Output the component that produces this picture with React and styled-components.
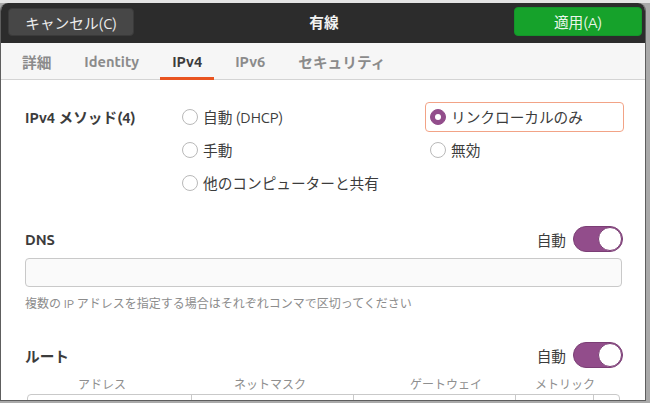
import styled, { createGlobalStyle } from 'styled-components';

const GlobalStyle = createGlobalStyle`
  html, body {
    margin: 0;
    padding: 0;
    width: 650px;
    height: 403px;
    overflow: hidden;
    background: #a9a9a9;
  }
  body {
    font-family: Ubuntu, "Noto Sans", "Noto Sans CJK JP", sans-serif;
  }
`;

const App = () => {
  return (
    <>
      <GlobalStyle />
      <Backdrop>
        <Window>
          <HeaderBar>
            <HeaderButton>キャンセル(C)</HeaderButton>
            <Title>有線</Title>
            <HeaderButton $primary>適用(A)</HeaderButton>
          </HeaderBar>
          <TabBar>
            <Tab>詳細</Tab>
            <Tab>Identity</Tab>
            <Tab $active>IPv4</Tab>
            <Tab>IPv6</Tab>
            <Tab>セキュリティ</Tab>
          </TabBar>
          <Content>
            <MethodGrid>
              <FieldLabel>IPv4 メソッド(4)</FieldLabel>
              <Option>
                <Radio />
                自動 (DHCP)
              </Option>
              <Option $focused>
                <Radio $checked />
                リンクローカルのみ
              </Option>
              <span />
              <Option>
                <Radio />
                手動
              </Option>
              <Option>
                <Radio />
                無効
              </Option>
              <span />
              <Option>
                <Radio />
                他のコンピューターと共有
              </Option>
            </MethodGrid>

            <SectionHeader $top={27}>
              <FieldLabel>DNS</FieldLabel>
              <AutoSwitch>
                自動
                <Toggle $on />
              </AutoSwitch>
            </SectionHeader>
            <TextInput />
            <Hint>複数の IP アドレスを指定する場合はそれぞれコンマで区切ってください</Hint>

            <SectionHeader $top={30}>
              <FieldLabel>ルート</FieldLabel>
              <AutoSwitch>
                自動
                <Toggle $on />
              </AutoSwitch>
            </SectionHeader>
            <ColumnHeads>
              <span>アドレス</span>
              <span>ネットマスク</span>
              <span>ゲートウェイ</span>
              <span>メトリック</span>
            </ColumnHeads>
            <RouteRow>
              <Cell />
              <Cell />
              <Cell />
              <Cell />
              <Cell />
            </RouteRow>
          </Content>
        </Window>
      </Backdrop>
    </>
  );
};

export default App;

const Backdrop = styled.div`
  width: 650px;
  height: 403px;
  padding-top: 3px;
  box-sizing: border-box;
  background: linear-gradient(to bottom, #e4e4e4 0, #e4e4e4 3px, #a9a9a9 3px);
`;

const Window = styled.div`
  width: 646px;
  height: 398px;
  box-sizing: border-box;
  border: 1px solid #5e5e5e;
  border-top: none;
  border-radius: 8px 8px 0 0;
  overflow: hidden;
  background: #ffffff;
  display: flex;
  flex-direction: column;
`;

const HeaderBar = styled.div`
  height: 40px;
  flex-shrink: 0;
  box-sizing: border-box;
  padding: 4px 3px 7px 7px;
  background: #2c2c2c;
  display: flex;
  align-items: stretch;
`;

const HeaderButton = styled.div`
  width: ${(p) => (p.$primary ? '128px' : '126px')};
  box-sizing: border-box;
  border-radius: 4px;
  margin-top: ${(p) => (p.$primary ? '0' : '1px')};
  background: ${(p) => (p.$primary ? '#16a22b' : '#474747')};
  border: 1px solid ${(p) => (p.$primary ? '#13952a' : '#3a3a3a')};
  color: ${(p) => (p.$primary ? '#eaf6ea' : '#ececec')};
  font-size: 14.67px;
  display: flex;
  align-items: center;
  justify-content: center;
`;

const Title = styled.div`
  flex: 1;
  color: #f2f2f2;
  font-weight: bold;
  font-size: 14.67px;
  display: flex;
  align-items: center;
  justify-content: center;
`;

const TabBar = styled.div`
  height: 37px;
  flex-shrink: 0;
  box-sizing: border-box;
  background: #f6f6f6;
  border-bottom: 1px solid #d4d4d4;
  padding-left: 9px;
  display: flex;
  gap: 9px;
`;

const Tab = styled.div`
  padding: 0 12px;
  margin-bottom: -1px;
  display: flex;
  align-items: center;
  font-size: 14.67px;
  font-weight: bold;
  color: ${(p) => (p.$active ? '#3c3c3c' : '#8b8b8b')};
  box-shadow: ${(p) => (p.$active ? 'inset 0 -3px 0 #e95420' : 'none')};
`;

const Content = styled.div`
  padding: 20px 22px 0 24px;
  display: flex;
  flex-direction: column;
`;

const MethodGrid = styled.div`
  display: grid;
  grid-template-columns: 157px 248px 1fr;
  grid-auto-rows: 33px;
  align-items: center;
`;

const FieldLabel = styled.div`
  font-size: 14.67px;
  font-weight: bold;
  color: #3c3c3c;
`;

const Option = styled.div`
  display: flex;
  align-items: center;
  gap: 5px;
  font-size: 14.67px;
  color: #3c3c3c;
  box-sizing: border-box;
  height: ${(p) => (p.$focused ? '30px' : '33px')};
  margin-left: ${(p) => (p.$focused ? '-5px' : '0')};
  margin-right: ${(p) => (p.$focused ? '-1px' : '0')};
  padding-left: ${(p) => (p.$focused ? '4px' : '0')};
  border: ${(p) => (p.$focused ? '1.5px solid #f2a386' : 'none')};
  border-radius: 4px;
`;

const Radio = styled.span`
  width: 16px;
  height: 16px;
  box-sizing: border-box;
  border-radius: 50%;
  flex-shrink: 0;
  background: ${(p) => (p.$checked ? '#924d8b' : '#ffffff')};
  border: 1px solid ${(p) => (p.$checked ? '#924d8b' : '#b9b9b9')};
  display: flex;
  align-items: center;
  justify-content: center;

  &::after {
    content: '';
    display: ${(p) => (p.$checked ? 'block' : 'none')};
    width: 6px;
    height: 6px;
    border-radius: 50%;
    background: #ffffff;
  }
`;

const SectionHeader = styled.div`
  margin-top: ${(p) => p.$top}px;
  height: 26px;
  display: flex;
  align-items: center;
  justify-content: space-between;
`;

const AutoSwitch = styled.div`
  display: flex;
  align-items: center;
  gap: 7px;
  font-size: 14.67px;
  color: #3c3c3c;
`;

const Toggle = styled.span`
  width: 50px;
  height: 26px;
  box-sizing: border-box;
  border-radius: 13px;
  background: ${(p) => (p.$on ? '#924d8b' : '#e0e0e0')};
  border: 1px solid ${(p) => (p.$on ? '#7b3e75' : '#c0c0c0')};
  display: flex;
  justify-content: ${(p) => (p.$on ? 'flex-end' : 'flex-start')};

  &::after {
    content: '';
    width: 24px;
    height: 24px;
    box-sizing: border-box;
    border-radius: 50%;
    background: #ffffff;
    border: 1px solid #7b3e75;
  }
`;

const TextInput = styled.div`
  margin-top: 6px;
  margin-right: 1px;
  height: 29px;
  box-sizing: border-box;
  background: #fafafa;
  border: 1px solid #c9c9c9;
  border-radius: 4px;
`;

const Hint = styled.div`
  margin-top: 9px;
  font-size: 12px;
  line-height: 16px;
  color: #8c8c8c;
`;

const ColumnHeads = styled.div`
  margin-top: 9px;
  height: 16px;
  display: grid;
  grid-template-columns: 154px 182px 170px 68px;
  font-size: 12px;
  line-height: 16px;
  color: #8f8f8f;
  text-align: center;
`;

const RouteRow = styled.div`
  margin: 1px 3px 0 2px;
  display: grid;
  grid-template-columns: 163px 162px 162px 78px 1fr;
  height: 30px;
  box-sizing: border-box;
  border: 1px solid #c9c9c9;
  border-radius: 4px 4px 0 0;
  overflow: hidden;
`;

const Cell = styled.div`
  border-left: 1px solid #c9c9c9;
  &:first-child {
    border-left: none;
  }
`;
